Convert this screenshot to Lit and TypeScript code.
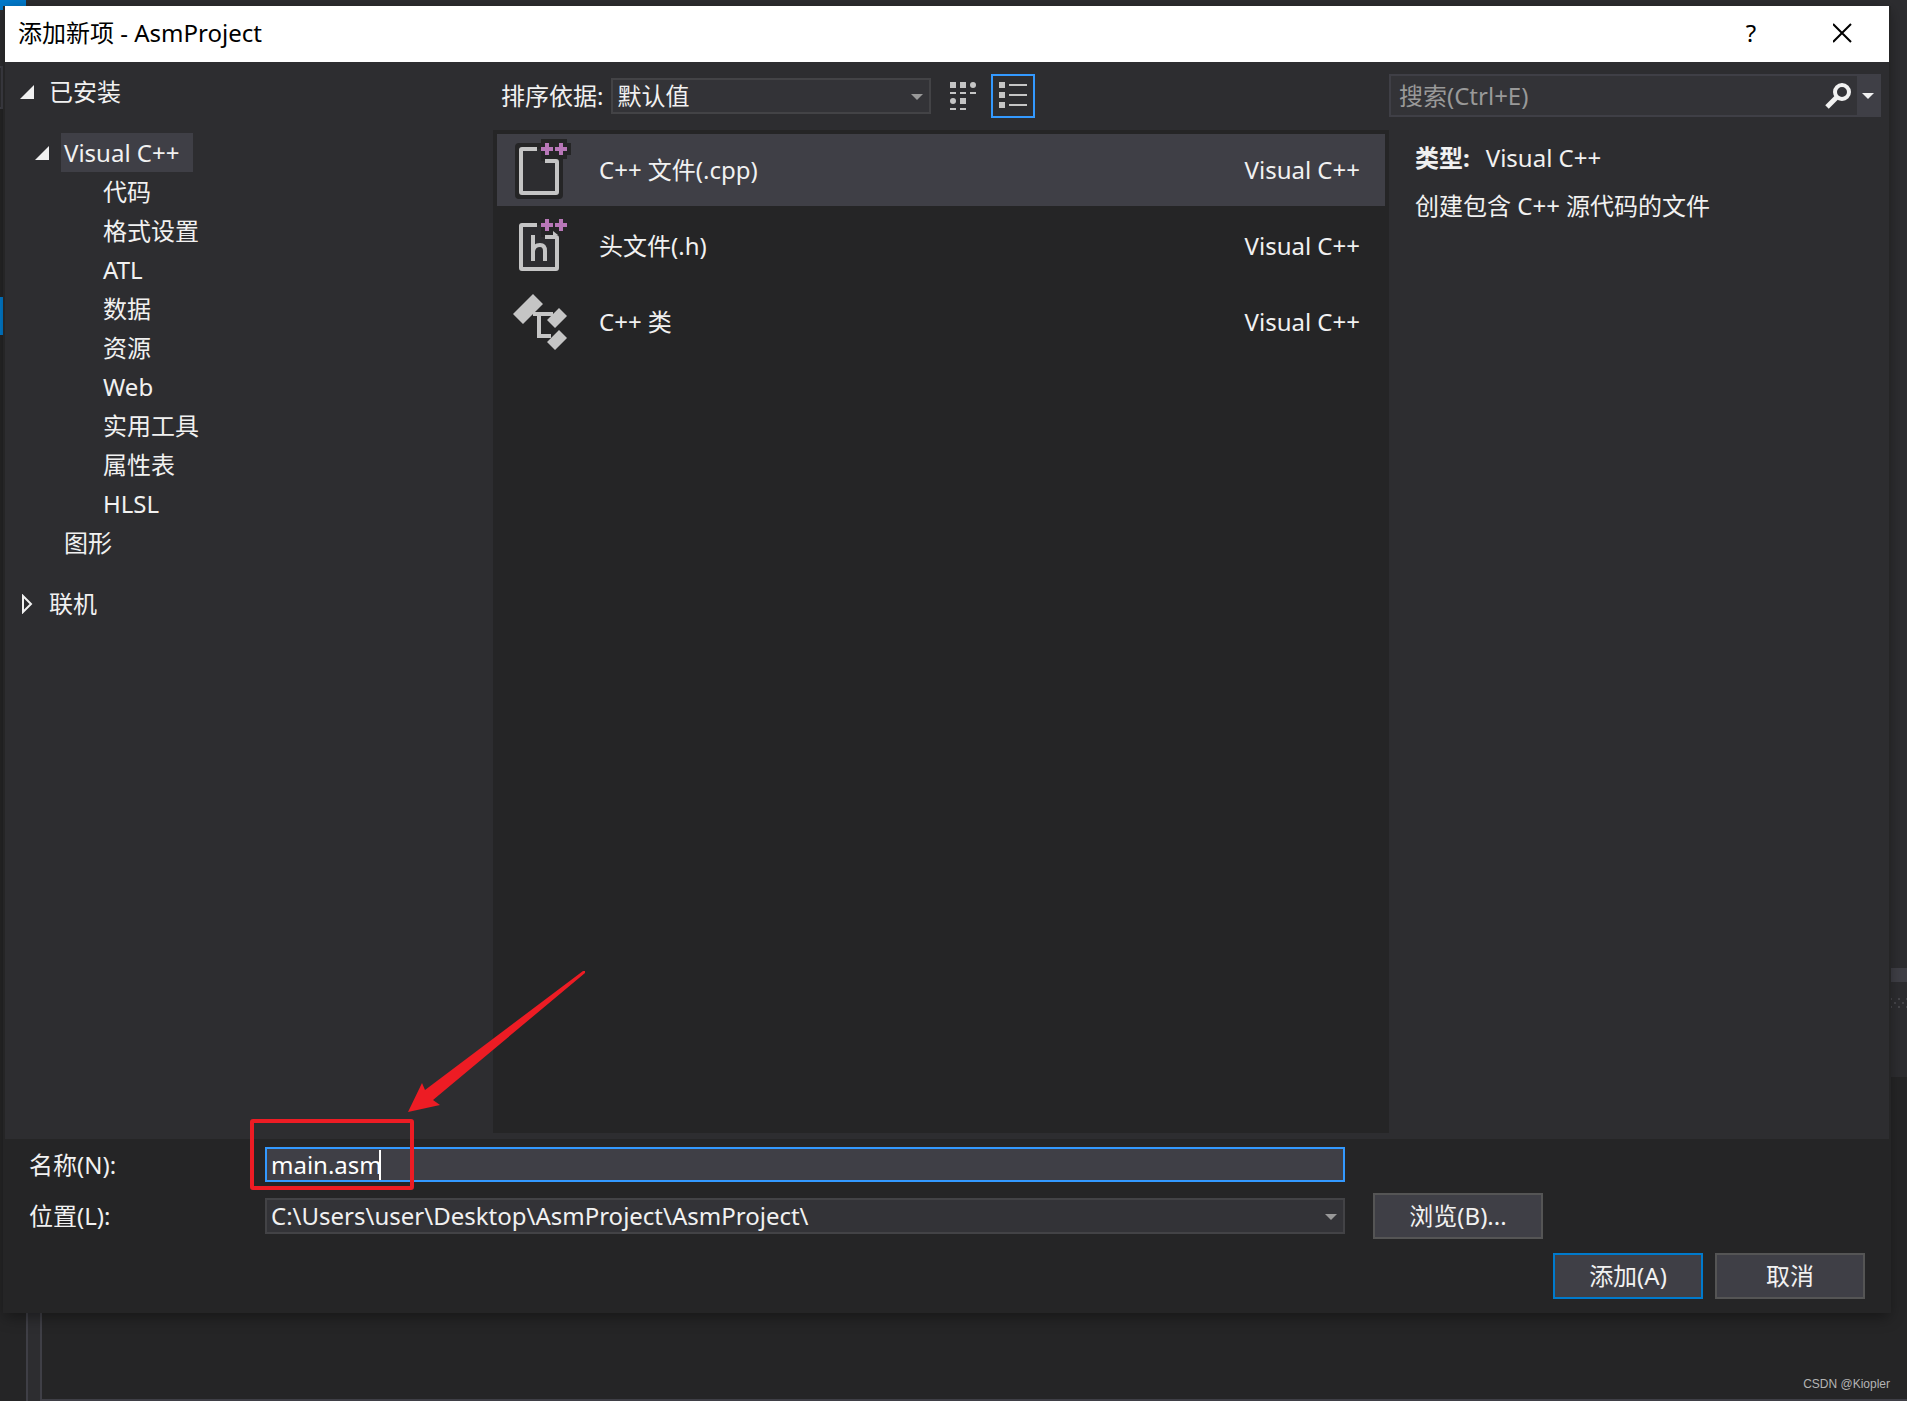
import { LitElement, html, css, svg, nothing } from "lit";
import { customElement, property, state } from "lit/decorators.js";
import { classMap } from "lit/directives/class-map.js";

const FONT = css`"Noto Sans", "Noto Sans CJK SC", sans-serif`;

type IconName = "cpp" | "header" | "class";

interface Template {
  icon: IconName;
  name: string;
  language: string;
}

interface TreeNode {
  label: string;
  depth: number;
  mark?: "open" | "closed";
  gap?: boolean;
}

const TEMPLATES: Template[] = [
  { icon: "cpp", name: "C++ 文件(.cpp)", language: "Visual C++" },
  { icon: "header", name: "头文件(.h)", language: "Visual C++" },
  { icon: "class", name: "C++ 类", language: "Visual C++" },
];

const TREE: TreeNode[] = [
  { label: "已安装", depth: 0, mark: "open" },
  { label: "Visual C++", depth: 1, mark: "open", gap: true },
  { label: "代码", depth: 2 },
  { label: "格式设置", depth: 2 },
  { label: "ATL", depth: 2 },
  { label: "数据", depth: 2 },
  { label: "资源", depth: 2 },
  { label: "Web", depth: 2 },
  { label: "实用工具", depth: 2 },
  { label: "属性表", depth: 2 },
  { label: "HLSL", depth: 2 },
  { label: "图形", depth: 1 },
  { label: "联机", depth: 0, mark: "closed", gap: true },
];

const pluses = svg`
  <path fill="#b877b8" d="M34 9h4v4h4v4h-4v4h-4v-4h-4v-4h4z M48 9h4v4h4v4h-4v4h-4v-4h-4v-4h4z" />`;

const sheet = svg`
  <path fill="#2d2d30" d="M10 15h20v12h16v32h-36z" />
  <path fill="none" stroke="#c5c5c5" stroke-width="4" d="M26 15H11a1 1 0 0 0-1 1V58a1 1 0 0 0 1 1H45a1 1 0 0 0 1-1V28a1 1 0 0 0-1-1H34" />`;

const ICONS = {
  cpp: svg`
    <path fill="#252526" d="M8 9h22V5h12h2h12v4h4v12h-4v4h-4v36a4 4 0 0 1-4 4H8a4 4 0 0 1-4-4V13a4 4 0 0 1 4-4z" />
    ${sheet}${pluses}`,
  header: svg`
    ${sheet}${pluses}
    <path fill="#c5c5c5" d="M42 21l5 4h-5z" />
    <path fill="none" stroke="#c5c5c5" stroke-width="4" d="M22 25V51M22 41q1-6 7-6q5 0 5 6V51" />`,
  class: svg`
    <path fill="#c5c5c5" d="M22 8l10 10l-20 20l-10-10z M48 22l8 8l-12 12l-8-8z M48 44l8 8l-12 12l-8-8z" />
    <path fill="none" stroke="#c5c5c5" stroke-width="4" d="M22 28H42M28 28V50H40" />`,
};

@customElement("template-icon")
class TemplateIcon extends LitElement {
  @property() name: IconName = "cpp";

  static styles = css`
    :host {
      display: block;
      width: 60px;
      height: 72px;
    }
    .icon {
      display: block;
    }
  `;

  render() {
    return html`<svg class="icon" width="60" height="72" viewBox="0 0 60 72" aria-hidden="true">
      ${ICONS[this.name]}
    </svg>`;
  }
}

@customElement("category-tree")
class CategoryTree extends LitElement {
  @state() private selected = "Visual C++";

  static styles = css`
    :host {
      display: block;
      padding: 10px 0 0 15px;
    }
    .tree {
      list-style: none;
      margin: 0;
      padding: 0;
    }
    .row {
      display: flex;
      align-items: center;
      gap: 12px;
      height: 39px;
    }
    .gap {
      margin-top: 22px;
    }
    .depth-1 {
      padding-left: 15px;
    }
    .depth-2 {
      padding-left: 54px;
    }
    .mark {
      flex: none;
      width: 14px;
      height: 20px;
    }
    .label {
      height: 39px;
      padding: 0 14px 0 3px;
      border: 0;
      background: none;
      color: #f1f1f1;
      font: 24px / 32px ${FONT};
      white-space: nowrap;
    }
    .depth-2 .mark {
      display: none;
    }
    .depth-2 .label {
      margin-left: 26px;
    }
    .selected {
      background: #3f3f46;
    }
  `;

  private mark(kind?: "open" | "closed") {
    return html`<svg class="mark" viewBox="0 0 14 20" aria-hidden="true">
      ${kind === "open" ? svg`<path fill="#f1f1f1" d="M14 3V17H0z" />` : nothing}
      ${kind === "closed"
        ? svg`<path fill="none" stroke="#f1f1f1" stroke-width="2" d="M3 2V18L11 10z" />`
        : nothing}
    </svg>`;
  }

  render() {
    return html`<ul class="tree">
      ${TREE.map(
        (n) => html`<li class=${classMap({ row: true, gap: !!n.gap, [`depth-${n.depth}`]: true })}>
          ${this.mark(n.mark)}
          <button
            class=${classMap({ label: true, selected: n.label === this.selected })}
            type="button"
            @click=${() => (this.selected = n.label)}
          >${n.label}</button>
        </li>`,
      )}
    </ul>`;
  }
}

@customElement("app-root")
class AppRoot extends LitElement {
  @state() private selected = 0;

  static styles = css`
    :host {
      display: block;
      color: #f1f1f1;
      font: 24px / 32px ${FONT};
    }
    * {
      box-sizing: border-box;
    }
    button,
    input,
    select {
      margin: 0;
      border-radius: 0;
      color: inherit;
      font: inherit;
      outline: none;
    }

    /* Editor window behind the dialog */
    .screen {
      position: relative;
      display: flex;
      flex-direction: column;
      min-height: 100vh;
      padding: 6px 18px 88px 5px;
      background: #252526;
      overflow: hidden;
    }
    .backdrop {
      position: absolute;
      inset: 0;
      display: grid;
      grid-template-columns: 26px 1fr 18px;
      grid-template-rows: 10px 1fr;
    }
    .corner {
      background: #007acc;
    }
    .top-edge {
      grid-column: 2 / 4;
      background: #2d2d30;
    }
    .left-edge {
      display: flex;
      flex-direction: column;
      background: #252526;
    }
    .left-top {
      height: 56px;
      background: #2d2d30;
    }
    .left-box {
      width: 3px;
      height: 43px;
      border: 2px solid #3f3f46;
      border-left: 0;
      background: #2d2d30;
    }
    .left-tab {
      width: 5px;
      height: 38px;
      margin-top: 188px;
      background: #007acc;
    }
    .editor {
      display: flex;
    }
    .gutter {
      width: 16px;
      border: solid #3f3f46;
      border-width: 0 2px;
      background: #2d2d30;
    }
    .code {
      flex: 1;
      border-bottom: 2px solid #3f3f46;
    }
    .right-edge {
      display: flex;
      flex-direction: column;
      border-bottom: 2px solid #3f3f46;
    }
    .right-top {
      height: 958px;
      background: #2d2d30;
    }
    .right-band {
      height: 14px;
      background: #3f3f46;
    }
    .right-grip {
      height: 95px;
      background: #2d2d30;
    }
    .grip {
      display: block;
      margin-top: 16px;
    }

    .dialog {
      position: relative;
      flex: 1;
      display: flex;
      flex-direction: column;
      box-shadow: -2px 0 0 #252526, 2px 0 0 #252526, 0 4px 14px rgba(0, 0, 0, 0.4);
      background: #252526;
    }

    .titlebar {
      display: flex;
      align-items: center;
      height: 56px;
      padding-left: 13px;
      background: #fff;
      color: #000;
    }
    .title {
      flex: 1;
      margin: 0;
      padding-bottom: 2px;
      font: inherit;
    }
    .caption {
      display: grid;
      place-items: center;
      width: 92px;
      height: 56px;
      padding: 0 0 2px;
      border: 0;
      background: none;
    }

    .body {
      flex: 1;
      display: grid;
      grid-template-columns: 488px minmax(0, 1fr) 500px;
      background: #2d2d30;
    }
    .center {
      display: flex;
      flex-direction: column;
      padding-bottom: 6px;
    }
    .toolbar {
      display: flex;
      align-items: center;
      height: 68px;
      padding: 0 0 0 8px;
    }
    .combo {
      position: relative;
      display: flex;
      min-width: 0;
    }
    .select {
      width: 100%;
      height: 36px;
      padding: 0 36px 0 4px;
      border: 2px solid #434346;
      background: #333337;
      appearance: none;
    }
    .arrow {
      position: absolute;
      right: 8px;
      top: 16px;
      pointer-events: none;
    }
    .sort {
      width: 320px;
      margin: 0 10px 0 8px;
    }
    .view {
      display: grid;
      place-items: center;
      width: 44px;
      height: 44px;
      padding: 0;
      border: 2px solid transparent;
      background: none;
    }
    .view + .view {
      margin-left: 6px;
    }
    .active {
      border-color: #3399ff;
    }

    .list {
      flex: 1;
      display: flex;
      flex-direction: column;
      gap: 4px;
      padding: 4px;
      background: #252526;
    }
    .item {
      display: flex;
      align-items: center;
      height: 72px;
      padding: 0 25px 0 14px;
      border: 0;
      background: none;
      text-align: left;
    }
    .item-name {
      flex: 1;
      padding-left: 28px;
    }
    .chosen {
      background: #3f3f46;
    }

    .side {
      padding: 12px 8px 0 0;
    }
    .search {
      display: flex;
      height: 43px;
      border: 2px solid #3f3f46;
      background: #333337;
    }
    .query {
      flex: 1;
      min-width: 0;
      padding: 0 8px;
      border: 0;
      background: none;
    }
    .query::placeholder {
      color: #999;
      opacity: 1;
    }
    .search-go {
      display: grid;
      place-items: center;
      width: 38px;
      padding: 0;
      border: 0;
      background: none;
    }
    .search-more {
      display: grid;
      place-items: center;
      width: 22px;
      padding: 0;
      border: 0;
      background: #3f3f46;
    }
    .details {
      display: grid;
      gap: 16px;
      padding: 25px 0 0 26px;
    }
    .kind {
      display: flex;
      gap: 16px;
      margin: 0;
    }
    .summary {
      margin: 0;
    }

    .footer {
      display: grid;
      padding: 8px 24px 14px;
    }
    .fields {
      display: grid;
      grid-template-columns: 208px minmax(0, 1fr) 170px;
      column-gap: 28px;
      row-gap: 11px;
      align-items: center;
      padding-right: 322px;
    }
    .name-field {
      position: relative;
      grid-column: 2;
    }
    .name {
      display: block;
      width: 100%;
      height: 35px;
      padding: 0 4px;
      border: 2px solid #3399ff;
      background: #3f3f46;
      color: #fff;
    }
    .caret {
      position: absolute;
      left: 114px;
      top: 3px;
      width: 2px;
      height: 30px;
      background: #fff;
    }
    .callout {
      position: absolute;
      left: -16px;
      bottom: -9px;
      pointer-events: none;
    }
    .name-label {
      grid-column: 1;
    }
    .push {
      width: 150px;
      height: 46px;
      padding: 0;
      border: 2px solid #555;
      background: #3f3f46;
    }
    .browse {
      width: 170px;
    }
    .primary {
      border-color: #007acc;
    }
    .actions {
      display: flex;
      justify-content: flex-end;
      gap: 12px;
      padding-top: 14px;
    }
    .watermark {
      position: absolute;
      right: 17px;
      bottom: 9px;
      color: #b4b4b4;
      font: 12px / 16px "Liberation Sans", sans-serif;
    }
  `;

  private arrow(color: string, cls: string) {
    return html`<svg class=${cls} width="12" height="6" viewBox="0 0 12 6" aria-hidden="true">
      <path fill=${color} d="M0 0H12L6 6z" />
    </svg>`;
  }

  private backdrop() {
    return html`<div class="backdrop" aria-hidden="true">
      <div class="corner"></div>
      <div class="top-edge"></div>
      <div class="left-edge">
        <div class="left-top"></div>
        <div class="left-box"></div>
        <div class="left-tab"></div>
      </div>
      <div class="editor">
        <div class="gutter"></div>
        <div class="code"></div>
      </div>
      <div class="right-edge">
        <div class="right-top"></div>
        <div class="right-band"></div>
        <div class="right-grip">
          <svg class="grip" width="18" height="10" viewBox="0 0 18 10">
            <path fill="#46464a" d="M1 0h2v2h-2z M9 0h2v2h-2z M17 0h1v2h-1z M5 4h2v2h-2z M13 4h2v2h-2z M1 8h2v2h-2z M9 8h2v2h-2z M17 8h1v2h-1z" />
          </svg>
        </div>
      </div>
    </div>`;
  }

  private toolbar() {
    return html`<div class="toolbar">
      <label for="sort">排序依据:</label>
      <div class="combo sort">
        <select class="select" id="sort">
          <option>默认值</option>
        </select>
        ${this.arrow("#999", "arrow")}
      </div>
      <button class="view" type="button" aria-label="小图标">
        <svg width="28" height="28" viewBox="0 0 28 28" fill="#c5c5c5">
          <path d="M1 0h6v6h-6z M11 0h6v6h-6z M11 16h6v6h-6z M1 10h6v2h-6z M11 10h6v2h-6z M21 10h6v2h-6z M1 26h6v2h-6z M11 26h6v2h-6z" />
          <circle cx="24" cy="3" r="3" />
          <circle cx="4" cy="19" r="3" />
        </svg>
      </button>
      <button class="view active" type="button" aria-label="列表">
        <svg width="28" height="28" viewBox="0 0 28 28" fill="#c5c5c5">
          <path d="M0 0h6v6h-6z M0 10h6v6h-6z M0 20h6v6h-6z M10 2h18v2h-18z M10 12h18v2h-18z M10 22h18v2h-18z" />
        </svg>
      </button>
    </div>`;
  }

  private side() {
    return html`<aside class="side">
      <div class="search">
        <input class="query" type="text" placeholder="搜索(Ctrl+E)" aria-label="搜索" />
        <button class="search-go" type="button" aria-label="搜索">
          <svg width="26" height="28" viewBox="0 0 26 28" fill="none" stroke="#f1f1f1">
            <circle cx="17" cy="10" r="7" stroke-width="4" />
            <path d="M12 15L2 25" stroke-width="5" />
          </svg>
        </button>
        <button class="search-more" type="button" aria-label="搜索选项">${this.arrow("#f1f1f1", "")}</button>
      </div>
      <div class="details">
        <p class="kind"><b>类型:</b><span>${TEMPLATES[this.selected].language}</span></p>
        <p class="summary">创建包含 C++ 源代码的文件</p>
      </div>
    </aside>`;
  }

  private footer() {
    return html`<form class="footer" @submit=${(e: Event) => e.preventDefault()}>
      <div class="fields">
        <label class="name-label" for="name">名称(N):</label>
        <div class="name-field">
          <input class="name" id="name" type="text" value="main.asm" spellcheck="false" />
          <span class="caret"></span>
          <svg class="callout" width="340" height="226" viewBox="0 0 340 226" aria-hidden="true">
            <rect x="3" y="156" width="160" height="67" rx="1" fill="none" stroke="#ed1c24" stroke-width="4" />
            <path fill="#ed1c24" d="M159 147L173 118L176 125L334 6L336 6L336 8L184 135L191 140z" />
          </svg>
        </div>
        <label class="name-label" for="location">位置(L):</label>
        <div class="combo">
          <select class="select" id="location">
            <option>C:\\Users\\user\\Desktop\\AsmProject\\AsmProject\\</option>
          </select>
          ${this.arrow("#999", "arrow")}
        </div>
        <button class="push browse" type="button">浏览(B)...</button>
      </div>
      <div class="actions">
        <button class="push primary" type="submit">添加(A)</button>
        <button class="push" type="button">取消</button>
      </div>
    </form>`;
  }

  render() {
    return html`<div class="screen">
      ${this.backdrop()}
      <main class="dialog" role="dialog" aria-labelledby="title">
        <header class="titlebar">
          <h1 class="title" id="title">添加新项 - AsmProject</h1>
          <button class="caption" type="button" aria-label="帮助">?</button>
          <button class="caption" type="button" aria-label="关闭">
            <svg width="20" height="20" viewBox="0 0 20 20" fill="none" stroke="#000" stroke-width="2">
              <path d="M0 1L18 19M18 1L0 19" />
            </svg>
          </button>
        </header>
        <div class="body">
          <category-tree></category-tree>
          <section class="center">
            ${this.toolbar()}
            <div class="list">
              ${TEMPLATES.map(
                (t, i) => html`<button
                  class=${classMap({ item: true, chosen: i === this.selected })}
                  type="button"
                  @click=${() => (this.selected = i)}
                >
                  <template-icon name=${t.icon}></template-icon>
                  <span class="item-name">${t.name}</span>
                  <span>${t.language}</span>
                </button>`,
              )}
            </div>
          </section>
          ${this.side()}
        </div>
        ${this.footer()}
      </main>
      <span class="watermark">CSDN @Kiopler</span>
    </div>`;
  }
}
